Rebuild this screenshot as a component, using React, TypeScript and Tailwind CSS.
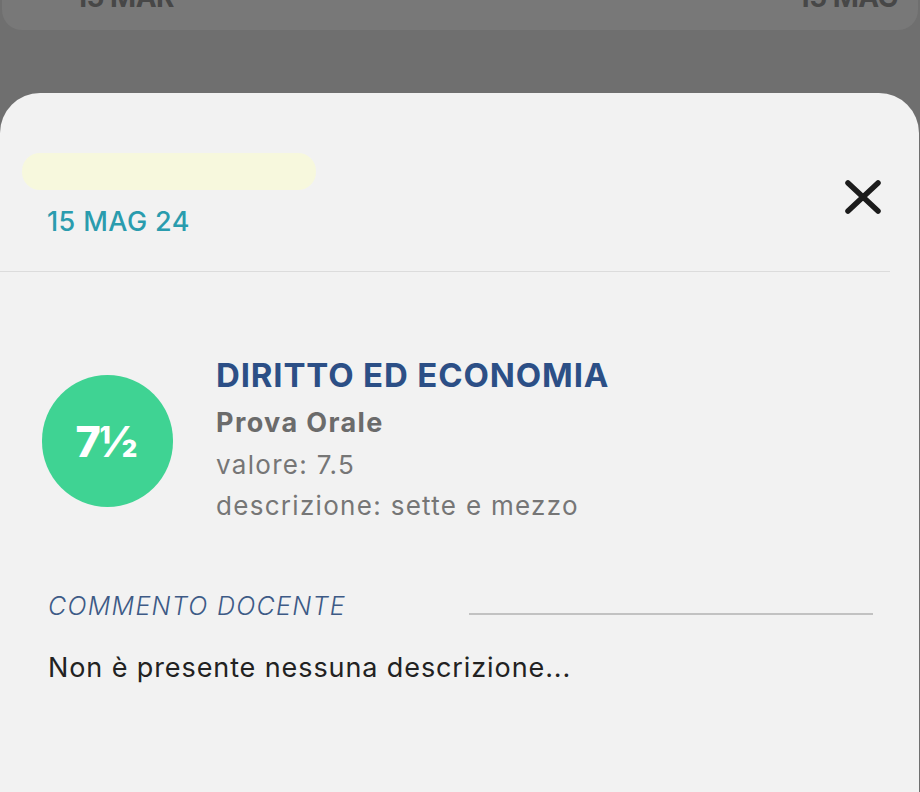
import { useState } from "react";

function CloseIcon() {
  return (
    <svg width="40" height="40" viewBox="0 0 40 40" fill="none">
      <path d="M5 5 L35 33 M35 5 L5 33" stroke="#1c1c1c" strokeWidth="5.5" strokeLinecap="round" />
    </svg>
  );
}

function App() {
  const [voto] = useState({
    materia: "DIRITTO ED ECONOMIA",
    tipo: "Prova Orale",
    valore: "7.5",
    descrizione: "sette e mezzo",
  });

  return (
    <div className="w-[920px] h-[792px] overflow-hidden bg-[#6f6f6f] flex flex-col font-['Inter',sans-serif]">
      {/* card dietro, oscurata */}
      <div className="h-[30px] mx-[2px] rounded-b-[20px] bg-[#787878] flex justify-between pl-[73px] pr-[20px] overflow-hidden shrink-0">
        <span className="text-[28px] leading-none font-bold text-[#474747] -mt-[17px] tracking-[-0.5px]">15 MAR</span>
        <span className="text-[28px] leading-none font-bold text-[#474747] -mt-[17px] tracking-[-0.5px]">15 MAG</span>
      </div>

      <div className="mt-[63px] flex-1 mr-[1px] rounded-t-[40px] bg-[#f2f2f2] flex flex-col">
        <div className="flex justify-between items-start border-b border-[#dcdcdc] mr-[29px] pb-[33px]">
          <div className="flex flex-col pt-[60px] pl-[22px]">
            <div className="w-[294px] h-[37px] rounded-[18px] bg-[#f7f8dd]" />
            <span className="mt-[16px] ml-[25px] text-[27px] leading-[32px] font-medium text-[#2a9cae] tracking-[0.4px]">
              15 MAG 24
            </span>
          </div>
          <button className="mt-[85px] mr-[7px]">
            <CloseIcon />
          </button>
        </div>

        <div className="flex items-start pt-[83px] pl-[42px] gap-[43px]">
          <div className="mt-[20px] w-[131px] h-[132px] rounded-full bg-[#3fd393] flex items-center justify-center">
            <span className="text-[43px] leading-none font-extrabold text-white tracking-[-2px] -ml-[4px]">7½</span>
          </div>
          <div className="flex flex-col">
            <span className="text-[33px] leading-[40px] font-bold text-[#2c4f86] tracking-[0.85px]">{voto.materia}</span>
            <span className="mt-[11px] text-[27px] leading-[33px] font-bold text-[#6b6b6b] tracking-[1.4px]">{voto.tipo}</span>
            <span className="mt-[10px] text-[26px] leading-[32px] text-[#767676] tracking-[1.3px]">valore: {voto.valore}</span>
            <span className="mt-[9px] text-[26px] leading-[32px] text-[#767676] tracking-[1.3px]">
              descrizione: {voto.descrizione}
            </span>
          </div>
        </div>

        <div className="flex items-start mt-[69px] pl-[48px] pr-[46px]">
          <span className="text-[25px] leading-[30px] italic font-light text-[#3d5a86] tracking-[1.3px]">COMMENTO DOCENTE</span>
          <div className="ml-auto mt-[22px] w-[404px] h-[2px] bg-[#c2c2c2]" />
        </div>
        <p className="mt-[30px] pl-[48px] text-[27px] leading-[33px] text-[#222222] tracking-[0.9px]">
          Non è presente nessuna descrizione...
        </p>
      </div>
    </div>
  );
}

export default App;
